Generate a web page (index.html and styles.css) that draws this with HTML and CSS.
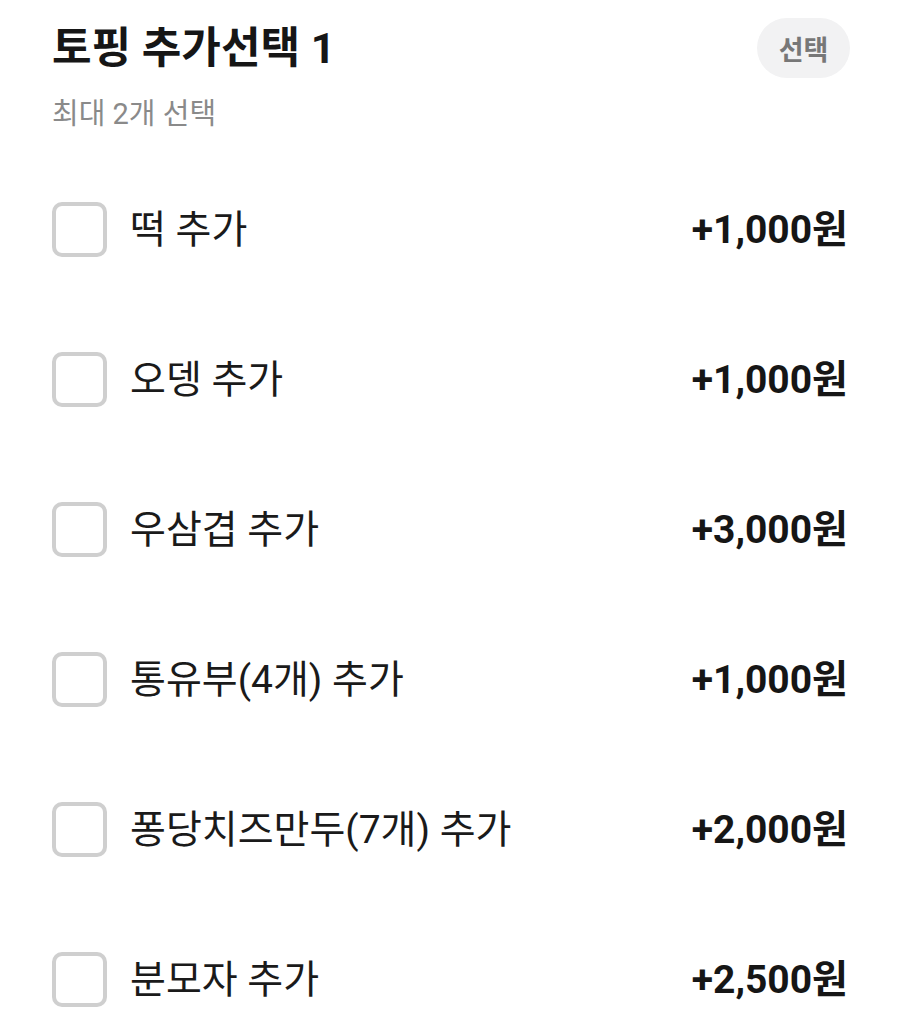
FILE: index.html
```html
<!DOCTYPE html>
<html lang="ko">
<head>
<meta charset="utf-8">
<link rel="stylesheet" href="styles.css">
</head>
<body>
<div class="panel">
  <div class="head">
    <div class="head-text">
      <h1 class="title">토핑 추가선택 1</h1>
      <p class="sub">최대 2개 선택</p>
    </div>
    <span class="badge">선택</span>
  </div>
  <ul class="list">
    <li class="row"><span class="box"></span><span class="label">떡 추가</span><span class="price">+1,000원</span></li>
    <li class="row"><span class="box"></span><span class="label">오뎅 추가</span><span class="price">+1,000원</span></li>
    <li class="row"><span class="box"></span><span class="label">우삼겹 추가</span><span class="price">+3,000원</span></li>
    <li class="row"><span class="box"></span><span class="label">통유부(4개) 추가</span><span class="price">+1,000원</span></li>
    <li class="row"><span class="box"></span><span class="label">퐁당치즈만두(7개) 추가</span><span class="price">+2,000원</span></li>
    <li class="row"><span class="box"></span><span class="label">분모자 추가</span><span class="price">+2,500원</span></li>
  </ul>
</div>
</body>
</html>
```

FILE: styles.css
```css
html, body {
  margin: 0;
  padding: 0;
  background: #fff;
}
body {
  font-family: Roboto, "Noto Sans CJK KR", sans-serif;
  color: #1a1a1a;
}
.panel {
  padding: 18px 52px 0 52px;
}
.head {
  display: flex;
  justify-content: space-between;
  align-items: flex-start;
}
.title {
  margin: 0;
  font-size: 43px;
  font-weight: 700;
  line-height: 60px;
  color: #161616;
}
.sub {
  margin: 18px 0 0 0;
  font-size: 29px;
  line-height: 36px;
  color: #8a8a8a;
}
.badge {
  display: flex;
  align-items: center;
  justify-content: center;
  width: 93px;
  height: 60px;
  border-radius: 30px;
  background: #f2f2f3;
  color: #777;
  font-size: 27px;
  font-weight: 700;
  margin-right: -2px;
}
.list {
  list-style: none;
  margin: 19px 0 0 0;
  padding: 0;
}
.row {
  display: flex;
  align-items: center;
  height: 150px;
}
.box {
  box-sizing: border-box;
  width: 55px;
  height: 55px;
  border: 4px solid #cfcfcf;
  border-radius: 10px;
  flex: none;
  margin-top: 6px;
}
.label {
  margin-left: 23px;
  font-size: 39px;
  flex: 1;
  color: #1a1a1a;
}
.price {
  font-size: 39px;
  font-weight: 700;
  color: #161616;
}
```
